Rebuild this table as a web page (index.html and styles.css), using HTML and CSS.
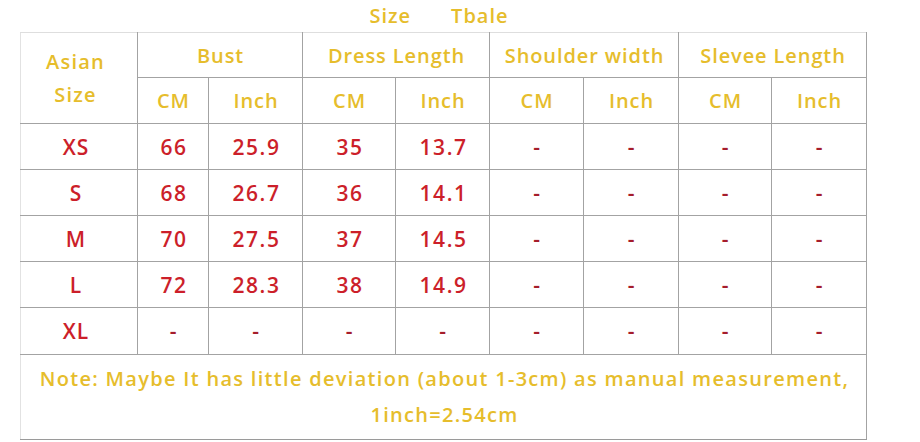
FILE: index.html
```html
<!DOCTYPE html>
<html>
<head>
<meta charset="utf-8">
<link rel="stylesheet" href="styles.css">
</head>
<body>
<div class="page">
  <div class="title"><span>Size</span><span>Tbale</span></div>
  <table class="size-table">
    <colgroup>
      <col class="c-size"><col class="c71"><col class="c94"><col class="c93"><col class="c94"><col class="c94"><col class="c95"><col class="c93"><col class="c95">
    </colgroup>
    <tr class="head1">
      <th rowspan="2" class="first head-size">Asian<br>Size</th>
      <th colspan="2">Bust</th>
      <th colspan="2">Dress Length</th>
      <th colspan="2">Shoulder width</th>
      <th colspan="2" class="last">Slevee Length</th>
    </tr>
    <tr class="head2">
      <th>CM</th><th>Inch</th><th>CM</th><th>Inch</th><th>CM</th><th>Inch</th><th>CM</th><th class="last">Inch</th>
    </tr>
    <tr>
      <td class="first">XS</td><td>66</td><td>25.9</td><td>35</td><td>13.7</td><td class="dash">-</td><td class="dash">-</td><td class="dash">-</td><td class="dash last">-</td>
    </tr>
    <tr>
      <td class="first">S</td><td>68</td><td>26.7</td><td>36</td><td>14.1</td><td class="dash">-</td><td class="dash">-</td><td class="dash">-</td><td class="dash last">-</td>
    </tr>
    <tr>
      <td class="first">M</td><td>70</td><td>27.5</td><td>37</td><td>14.5</td><td class="dash">-</td><td class="dash">-</td><td class="dash">-</td><td class="dash last">-</td>
    </tr>
    <tr>
      <td class="first">L</td><td>72</td><td>28.3</td><td>38</td><td>14.9</td><td class="dash">-</td><td class="dash">-</td><td class="dash">-</td><td class="dash last">-</td>
    </tr>
    <tr class="row-xl">
      <td class="first">XL</td><td class="dash">-</td><td class="dash">-</td><td class="dash">-</td><td class="dash">-</td><td class="dash">-</td><td class="dash">-</td><td class="dash">-</td><td class="dash last">-</td>
    </tr>
    <tr class="note-row">
      <td colspan="9" class="note first last">Note: Maybe It has little deviation (about 1-3cm) as manual measurement,<br>1inch=2.54cm</td>
    </tr>
  </table>
</div>
</body>
</html>
```

FILE: styles.css
```css
html, body {
  margin: 0;
  padding: 0;
  background: #ffffff;
}
body {
  width: 920px;
  height: 442px;
  overflow: hidden;
  font-family: "Open Sans", "DejaVu Sans", sans-serif;
  font-weight: 600;
}
.page {
  padding-left: 20px;
}
.title {
  width: 846px;
  height: 32px;
  display: flex;
  justify-content: center;
  gap: 40px;
  line-height: 32px;
  font-size: 20px;
  letter-spacing: 1px;
  color: #e6bd2c;
  padding-right: 8px;
  box-sizing: border-box;
}
.size-table {
  border-collapse: collapse;
  table-layout: fixed;
  width: 846px;
}
.c-size { width: 117px; }
.c71 { width: 71px; }
.c93 { width: 93px; }
.c94 { width: 94px; }
.c95 { width: 95px; }
.size-table th,
.size-table td {
  border: 1px solid #a3a3a3;
  padding: 0;
  text-align: center;
  vertical-align: middle;
}
.size-table th {
  color: #e6bd2c;
  font-size: 20px;
  font-weight: 600;
  letter-spacing: 0.9px;
  padding-left: 1px;
}
.size-table td {
  color: #cc1f2a;
  font-size: 21px;
  letter-spacing: 1.6px;
  padding-left: 2px;
  height: 45px;
}
.head1 th { height: 44px; border-top-color: #dedede; }
.head2 th { height: 45px; }
.size-table th.head-size { line-height: 33px; padding-right: 8px; letter-spacing: 1.2px; }
.size-table .first { border-left-color: #e2e2e2; }
.size-table td.first { padding-right: 8px; letter-spacing: 1px; }
.size-table .dash { color: #a51d2b; }
.row-xl td { height: 46px; }
.size-table td.note {
  height: 84px;
  color: #e6bd2c;
  font-size: 20px;
  letter-spacing: 1.3px;
  line-height: 36px;
  padding: 0 0 0 2px;
  border-bottom-color: #9a9a9a;
}
```
